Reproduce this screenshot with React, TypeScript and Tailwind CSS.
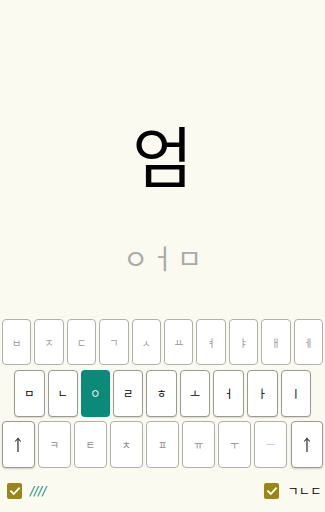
import React from 'react';

const FONT = '"Noto Sans CJK KR", "Noto Sans", sans-serif';

const row1 = ['ㅂ', 'ㅈ', 'ㄷ', 'ㄱ', 'ㅅ', 'ㅛ', 'ㅕ', 'ㅑ', 'ㅐ', 'ㅔ'];
const row2 = ['ㅁ', 'ㄴ', 'ㅇ', 'ㄹ', 'ㅎ', 'ㅗ', 'ㅓ', 'ㅏ', 'ㅣ'];
const row3 = ['ㅋ', 'ㅌ', 'ㅊ', 'ㅍ', 'ㅠ', 'ㅜ', 'ㅡ'];

function Check() {
  return (
    <div className="w-[15px] h-[16px] rounded-[2px] bg-[#9a8614] flex items-center justify-center">
      <svg width="12" height="12" viewBox="0 0 12 12" fill="none">
        <path d="M2 6.2 L4.8 9 L10 3.2" stroke="white" strokeWidth="1.8" strokeLinecap="square" />
      </svg>
    </div>
  );
}

function ShiftKey() {
  return (
    <div className="flex-1 rounded-[4px] border border-[#9a9a92] bg-white shadow-[0_1px_2px_rgba(0,0,0,0.18)] flex items-center justify-center">
      <svg width="8" height="16" viewBox="0 0 8 16" fill="none">
        <path d="M4 1.5 V15" stroke="#3a3a3a" strokeWidth="1.3" />
        <path d="M1.2 4.5 L4 1.3 L6.8 4.5" stroke="#3a3a3a" strokeWidth="1.1" fill="none" />
      </svg>
    </div>
  );
}

export default function App() {
  return (
    <div className="w-[325px] h-[512px] bg-[#fbfaf0] flex flex-col overflow-hidden antialiased" style={{ fontFamily: FONT }}>
      {/* Current syllable */}
      <div className="h-[319px] flex flex-col items-center">
        <div className="mt-[120px] text-[66px] leading-none text-black">엄</div>
        <div className="mt-[58px] flex items-center gap-[2px] text-[27px] leading-none text-[#aaaaaa]">
          <span>ㅇ</span>
          <span>ㅓ</span>
          <span>ㅁ</span>
        </div>
      </div>

      {/* Keyboard */}
      <div className="flex px-[2px] gap-[3px] h-[46px]">
        {row1.map((k) => (
          <div
            key={k}
            className="flex-1 rounded-[4px] border border-[#b0b0a8] bg-white flex items-center justify-center text-[10px] text-[#9a9a9a]"
          >
            {k}
          </div>
        ))}
      </div>
      <div className="flex px-[14px] gap-[3px] h-[47px] mt-[5px]">
        {row2.map((k) =>
          k === 'ㅇ' ? (
            <div
              key={k}
              className="flex-1 rounded-[4px] bg-[#0b8a77] flex items-center justify-center text-[11px] text-white"
            >
              {k}
            </div>
          ) : (
            <div
              key={k}
              className="flex-1 rounded-[4px] border border-[#9a9a92] bg-white shadow-[0_1px_1px_rgba(0,0,0,0.12)] flex items-center justify-center text-[11px] text-black"
            >
              {k}
            </div>
          )
        )}
      </div>
      <div className="flex px-[2px] gap-[3.5px] h-[47px] mt-[4px]">
        <ShiftKey />
        {row3.map((k) => (
          <div
            key={k}
            className={`flex-1 rounded-[4px] border border-[#b0b0a8] bg-white flex items-center justify-center text-[10px] ${
              k === 'ㅡ' ? 'text-[#c4c4c4]' : 'text-[#8a8a8a]'
            }`}
          >
            {k}
          </div>
        ))}
        <ShiftKey />
      </div>

      {/* Bottom options */}
      <div className="flex-1 flex items-center justify-between pl-[7px] pr-[3px] pt-[2px]">
        <div className="flex items-center gap-[8px]">
          <Check />
          <span className="italic text-[12px] text-[#0b8a77]" style={{ fontFamily: '"DejaVu Sans", sans-serif' }}>
            ////
          </span>
        </div>
        <div className="flex items-center gap-[8px]">
          <Check />
          <span className="text-[12px] text-black tracking-[0.5px]">ㄱㄴㄷ</span>
        </div>
      </div>
    </div>
  );
}
